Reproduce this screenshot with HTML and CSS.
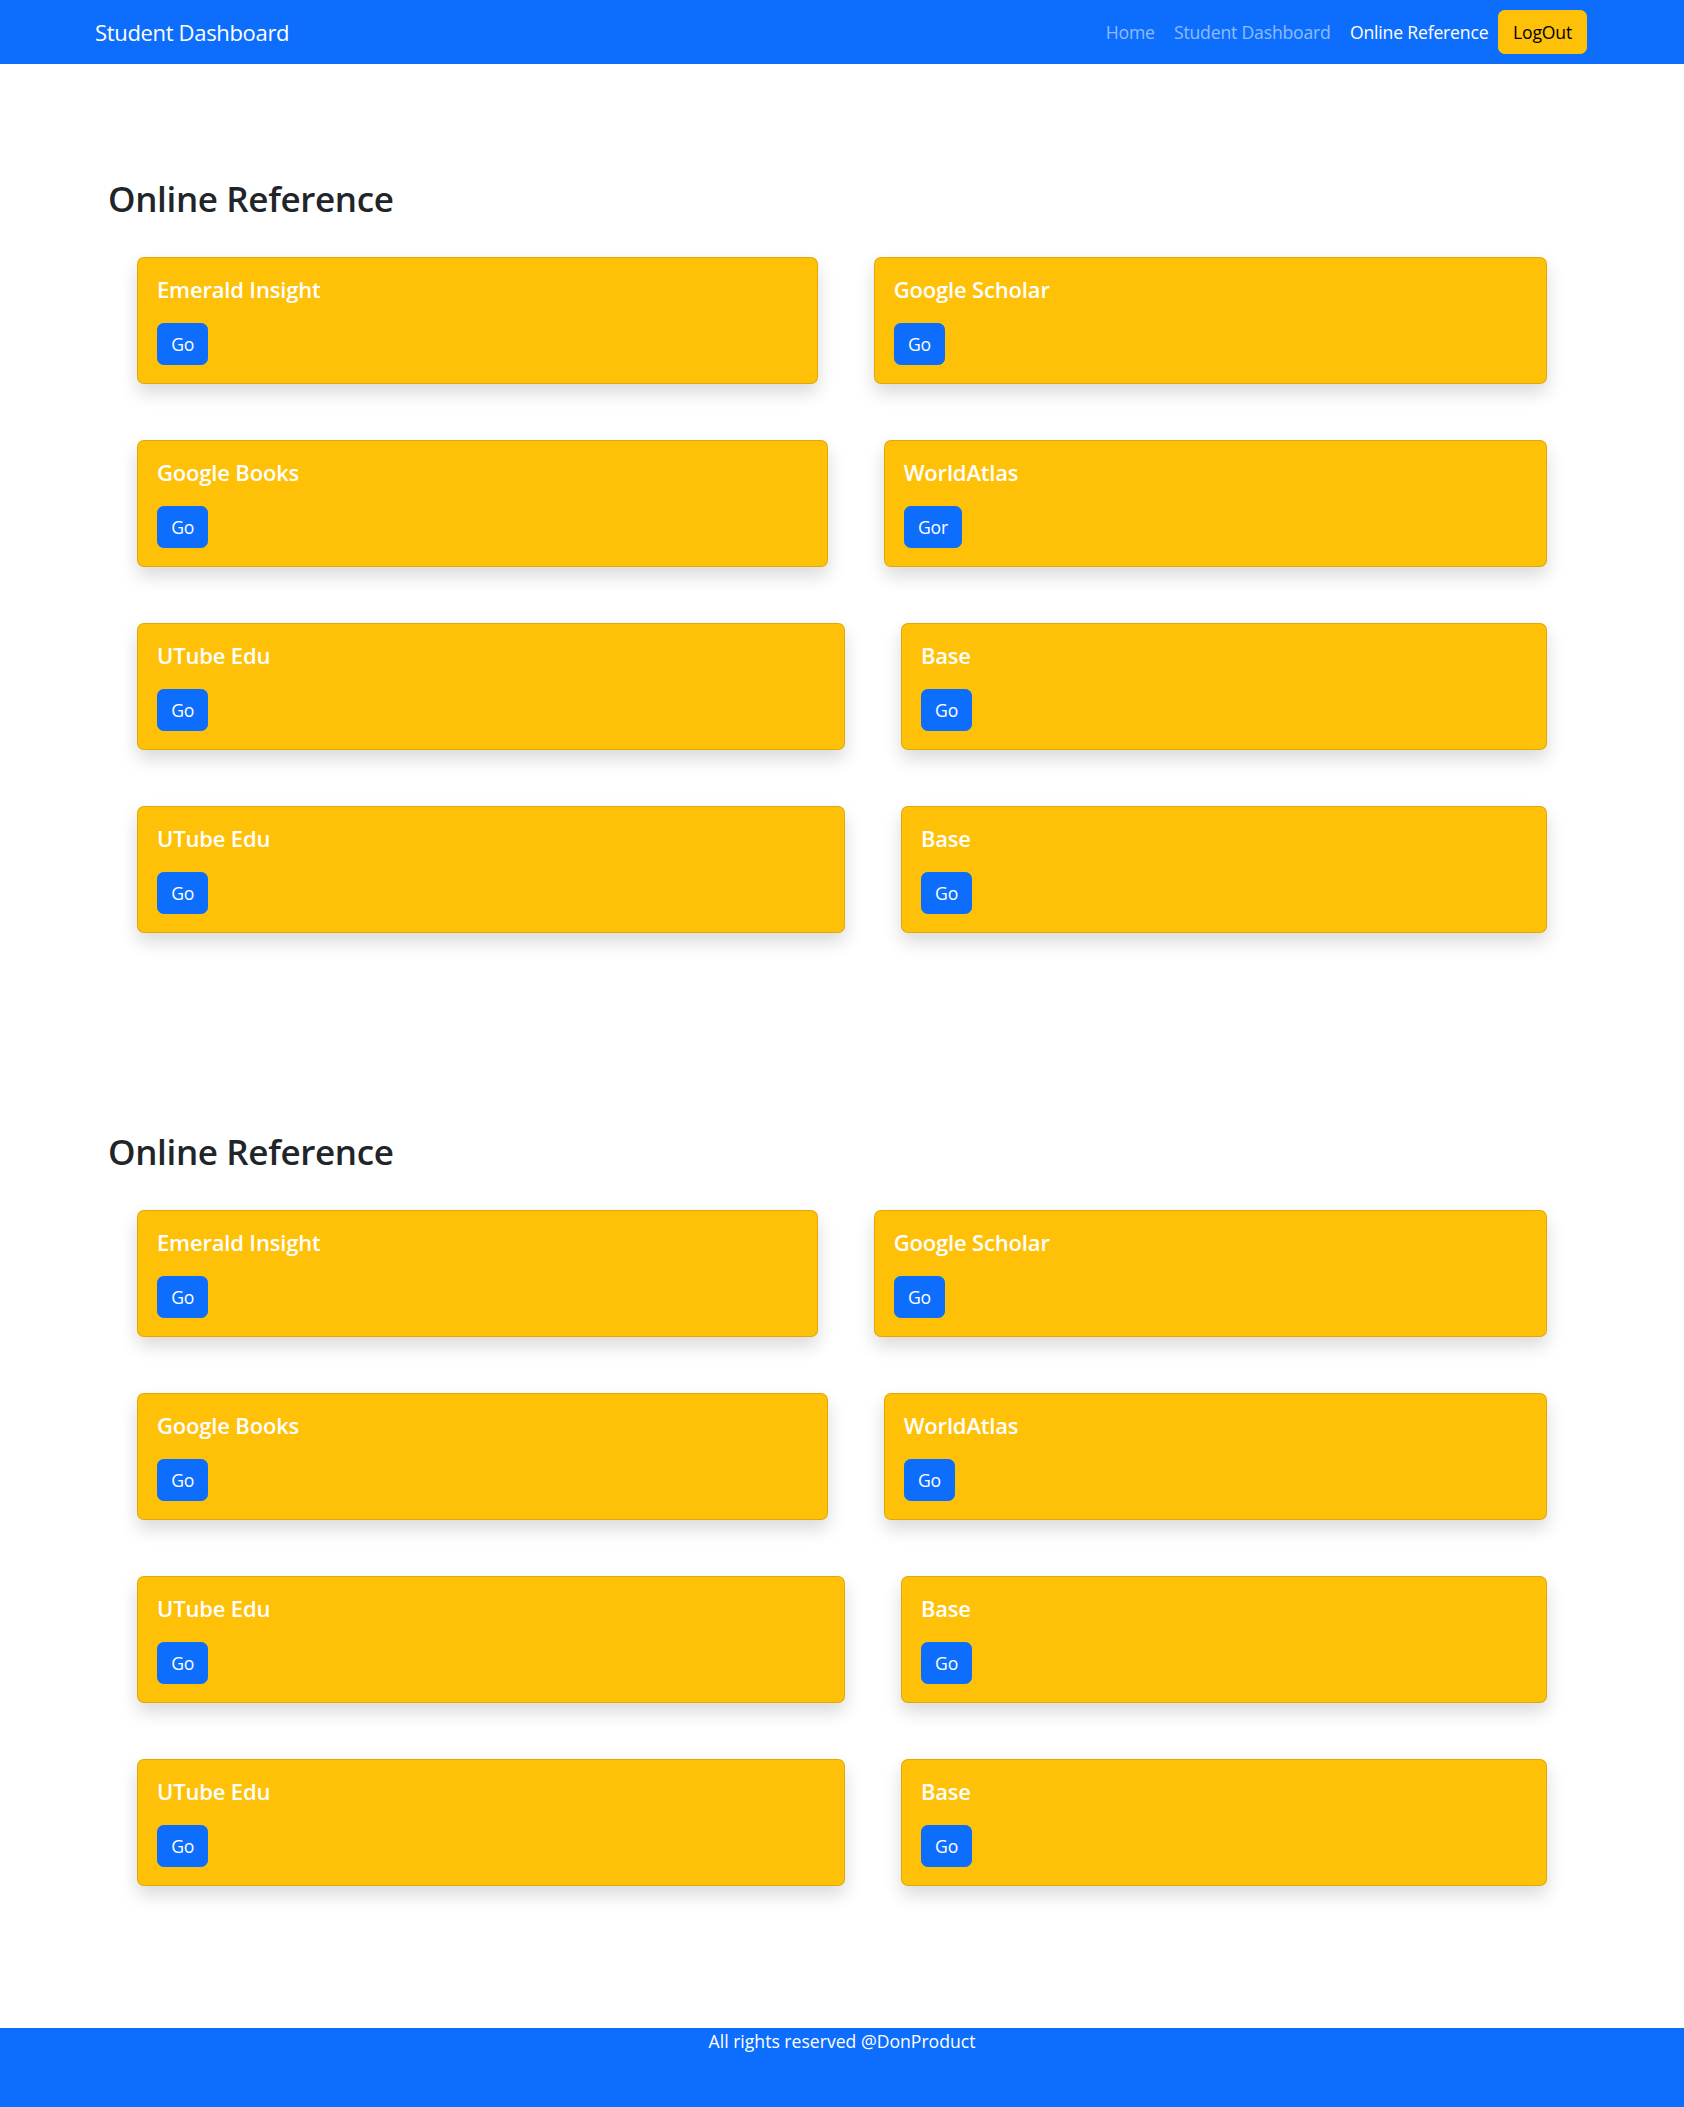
FILE: index.html
```html
<!DOCTYPE html>
<html lang="en">
<head>
<meta charset="utf-8">
<title>Student Dashboard</title>
<link rel="stylesheet" href="styles.css">
</head>
<body>
<nav class="navbar">
  <a class="brand" href="#">Student Dashboard</a>
  <div class="nav-links">
    <a class="nav-link" href="#">Home</a>
    <a class="nav-link" href="#">Student Dashboard</a>
    <a class="nav-link active" href="#">Online Reference</a>
    <a class="btn-logout" href="#">LogOut</a>
  </div>
</nav>

<main class="main">
  <section class="section">
    <h2 class="section-title">Online Reference</h2>
    <div class="rows">
      <div class="row">
        <div class="card"><h5 class="card-title">Emerald Insight</h5><a class="btn-go" href="#">Go</a></div>
        <div class="card"><h5 class="card-title">Google Scholar</h5><a class="btn-go" href="#">Go</a></div>
      </div>
      <div class="row">
        <div class="card"><h5 class="card-title">Google Books</h5><a class="btn-go" href="#">Go</a></div>
        <div class="card"><h5 class="card-title">WorldAtlas</h5><a class="btn-go" href="#">Gor</a></div>
      </div>
      <div class="row">
        <div class="card"><h5 class="card-title">UTube Edu</h5><a class="btn-go" href="#">Go</a></div>
        <div class="card"><h5 class="card-title">Base</h5><a class="btn-go" href="#">Go</a></div>
      </div>
      <div class="row">
        <div class="card"><h5 class="card-title">UTube Edu</h5><a class="btn-go" href="#">Go</a></div>
        <div class="card"><h5 class="card-title">Base</h5><a class="btn-go" href="#">Go</a></div>
      </div>
    </div>
  </section>

  <section class="section">
    <h2 class="section-title">Online Reference</h2>
    <div class="rows">
      <div class="row">
        <div class="card"><h5 class="card-title">Emerald Insight</h5><a class="btn-go" href="#">Go</a></div>
        <div class="card"><h5 class="card-title">Google Scholar</h5><a class="btn-go" href="#">Go</a></div>
      </div>
      <div class="row">
        <div class="card"><h5 class="card-title">Google Books</h5><a class="btn-go" href="#">Go</a></div>
        <div class="card"><h5 class="card-title">WorldAtlas</h5><a class="btn-go" href="#">Go</a></div>
      </div>
      <div class="row">
        <div class="card"><h5 class="card-title">UTube Edu</h5><a class="btn-go" href="#">Go</a></div>
        <div class="card"><h5 class="card-title">Base</h5><a class="btn-go" href="#">Go</a></div>
      </div>
      <div class="row">
        <div class="card"><h5 class="card-title">UTube Edu</h5><a class="btn-go" href="#">Go</a></div>
        <div class="card"><h5 class="card-title">Base</h5><a class="btn-go" href="#">Go</a></div>
      </div>
    </div>
  </section>
</main>

<footer class="footer">
  <p class="footer-text">All rights reserved @DonProduct</p>
</footer>
</body>
</html>
```

FILE: styles.css
```css
* {
  box-sizing: border-box;
}

html, body {
  margin: 0;
  padding: 0;
}

body {
  font-family: "Open Sans", "Noto Sans", "Liberation Sans", sans-serif;
  font-size: 17.6px;
  line-height: 1.5;
  color: #212529;
  background: #fff;
  letter-spacing: -0.01em;
}

a {
  text-decoration: none;
}

/* Navbar */
.navbar {
  height: 64px;
  background: #0d6efd;
  display: flex;
  align-items: center;
  justify-content: space-between;
  padding: 0 97px 0 95px;
}

.brand {
  color: #fff;
  font-size: 22px;
  line-height: 33px;
  letter-spacing: -0.015em;
}

.nav-links {
  display: flex;
  align-items: center;
}

.nav-link {
  color: rgba(255, 255, 255, 0.55);
  font-size: 17.6px;
  line-height: 26.4px;
  padding: 0 9.6px;
}

.nav-link.active {
  color: #fff;
}

.btn-logout {
  display: inline-block;
  background: #ffc107;
  color: #000;
  font-size: 17.6px;
  line-height: 26.4px;
  padding: 8px 14px;
  border: 1px solid #ffc107;
  border-radius: 6.6px;
}

/* Main */
.main {
  margin-bottom: 58px;
}

.section {
  padding: 114px 108px 84px;
}

.section-title {
  margin: 0 0 37px;
  font-size: 35px;
  line-height: 42px;
  font-weight: 600;
  color: #212529;
  letter-spacing: -0.01em;
}

.rows {
  padding: 0 29px;
  display: flex;
  flex-direction: column;
  gap: 56px;
}

.row {
  display: flex;
  gap: 56px;
}

.card {
  flex: 1 1 auto;
  background: #ffc107;
  border: 1px solid rgba(0, 0, 0, 0.12);
  border-radius: 7px;
  box-shadow: 0 9px 18px rgba(0, 0, 0, 0.15);
  padding: 18px 19px;
}

.card-title {
  margin: 0 0 21px;
  color: #fff;
  font-size: 22px;
  line-height: 26.4px;
  font-weight: 600;
}

.btn-go {
  display: inline-block;
  background: #0d6efd;
  color: #fff;
  font-size: 17.6px;
  line-height: 26.4px;
  padding: 6.6px 13.2px;
  border: 1px solid #0d6efd;
  border-radius: 6.6px;
}

/* Footer */
.footer {
  background: #0d6efd;
  height: 80px;
  text-align: center;
}

.footer-text {
  margin: 0;
  color: #fff;
  font-size: 17.6px;
  line-height: 26.4px;
  letter-spacing: 0;
}
```
